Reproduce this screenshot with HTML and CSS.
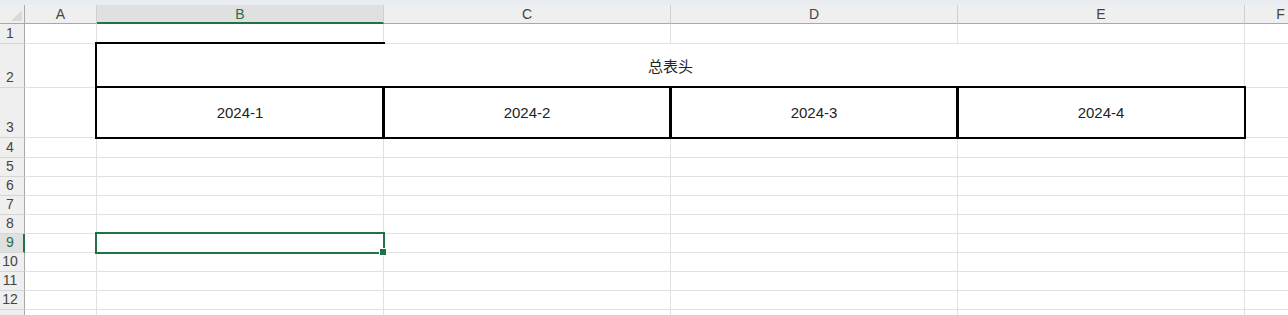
FILE: index.html
```html
<!DOCTYPE html>
<html lang="zh-CN">
<head>
    <meta charset="UTF-8">
    <meta name="viewport" content="width=device-width, initial-scale=1.0">
    <title>Sheet1</title>
    <link rel="stylesheet" href="styles.css">
</head>
<body>
    <div class="topbar"></div>
    <div class="sheet">
        <!-- column headers -->
        <div class="corner"></div>
        <div class="ch">A</div>
        <div class="ch sel">B</div>
        <div class="ch">C</div>
        <div class="ch">D</div>
        <div class="ch">E</div>
        <div class="ch">F</div>

        <!-- row 1 -->
        <div class="rh">1</div>
        <div class="c"></div><div class="c"></div><div class="c"></div><div class="c"></div><div class="c"></div><div class="c"></div>

        <!-- row 2: merged B2:E2 -->
        <div class="rh">2</div>
        <div class="c"></div>
        <div class="c merged">总表头</div>
        <div class="c"></div>

        <!-- row 3 -->
        <div class="rh">3</div>
        <div class="c"></div>
        <div class="c thick">2024-1</div>
        <div class="c thick">2024-2</div>
        <div class="c thick">2024-3</div>
        <div class="c thick">2024-4</div>
        <div class="c"></div>

        <div class="rh">4</div>
        <div class="c"></div><div class="c"></div><div class="c"></div><div class="c"></div><div class="c"></div><div class="c"></div>
        <div class="rh">5</div>
        <div class="c"></div><div class="c"></div><div class="c"></div><div class="c"></div><div class="c"></div><div class="c"></div>
        <div class="rh">6</div>
        <div class="c"></div><div class="c"></div><div class="c"></div><div class="c"></div><div class="c"></div><div class="c"></div>
        <div class="rh">7</div>
        <div class="c"></div><div class="c"></div><div class="c"></div><div class="c"></div><div class="c"></div><div class="c"></div>
        <div class="rh">8</div>
        <div class="c"></div><div class="c"></div><div class="c"></div><div class="c"></div><div class="c"></div><div class="c"></div>

        <!-- row 9: active cell B9 -->
        <div class="rh sel">9</div>
        <div class="c"></div>
        <div class="c active"><span class="handle"></span></div>
        <div class="c"></div><div class="c"></div><div class="c"></div><div class="c"></div>

        <div class="rh">10</div>
        <div class="c"></div><div class="c"></div><div class="c"></div><div class="c"></div><div class="c"></div><div class="c"></div>
        <div class="rh">11</div>
        <div class="c"></div><div class="c"></div><div class="c"></div><div class="c"></div><div class="c"></div><div class="c"></div>
        <div class="rh">12</div>
        <div class="c"></div><div class="c"></div><div class="c"></div><div class="c"></div><div class="c"></div><div class="c"></div>
        <!-- row 13 is only a sliver at the bottom edge -->
        <div class="rh"></div>
        <div class="c"></div><div class="c"></div><div class="c"></div><div class="c"></div><div class="c"></div><div class="c"></div>
    </div>
</body>
</html>
```

FILE: styles.css
```css
body {
    margin: 0;
    background-color: #fff;
    overflow: hidden;
    font-family: "Liberation Sans", "Noto Sans CJK SC", sans-serif;
}
.topbar {
    height: 5px;
    background-color: #e9edf1;
}
.sheet {
    display: grid;
    grid-template-columns: 25px 72px repeat(4, 287px) 72px;
    grid-template-rows: 19px 20px 44px 50px 20px repeat(9, 19px);
    width: max-content;
}
.corner {
    position: relative;
    background-color: #efefef;
    border-right: 1px solid #a8a8a8;
    border-bottom: 1px solid #a8a8a8;
}
.corner::after {
    content: "";
    position: absolute;
    right: 2px;
    bottom: 2px;
    width: 11px;
    height: 11px;
    background-color: #d9d9d9;
    clip-path: polygon(100% 0, 100% 100%, 0 100%);
}
.ch {
    display: flex;
    align-items: center;
    justify-content: center;
    background-color: #efefef;
    border-right: 1px solid #cfcfcf;
    border-bottom: 1px solid #a8a8a8;
    font-size: 14px;
    color: #444;
}
.ch.sel {
    background-color: #e0e0e0;
    color: #217346;
    border-bottom: 2px solid #217346;
}
.rh {
    display: flex;
    align-items: flex-end;
    justify-content: center;
    padding: 0 4px 2px 0;
    background-color: #efefef;
    border-right: 1px solid #a8a8a8;
    border-bottom: 1px solid #d6d6d6;
    font-size: 14px;
    color: #444;
}
.rh.sel {
    background-color: #e0e0e0;
    color: #217346;
    border-right: 2px solid #217346;
    padding-right: 3px;
}
.c {
    position: relative;
    display: flex;
    align-items: center;
    justify-content: center;
    border-right: 1px solid #e1e1e1;
    border-bottom: 1px solid #e1e1e1;
    font-size: 15px;
    color: #222;
}
.merged {
    grid-column: span 4;
}
/* the top border of the merged header only runs over column B */
.merged::before {
    content: "";
    position: absolute;
    top: -2px;
    left: -2px;
    width: 290px;
    height: 2px;
    background-color: #000;
    z-index: 1;
}
.merged::after {
    content: "";
    position: absolute;
    top: -2px;
    bottom: 0;
    left: -2px;
    width: 2px;
    background-color: #000;
    z-index: 1;
}
.thick::after {
    content: "";
    position: absolute;
    inset: -2px;
    border: 2px solid #000;
    z-index: 1;
}
.active::after {
    content: "";
    position: absolute;
    inset: -2px;
    border: 2px solid #217346;
    z-index: 1;
}
.handle {
    position: absolute;
    right: -3px;
    bottom: -3px;
    width: 6px;
    height: 6px;
    background-color: #217346;
    box-shadow: 0 0 0 1px #fff;
    z-index: 2;
}
```
